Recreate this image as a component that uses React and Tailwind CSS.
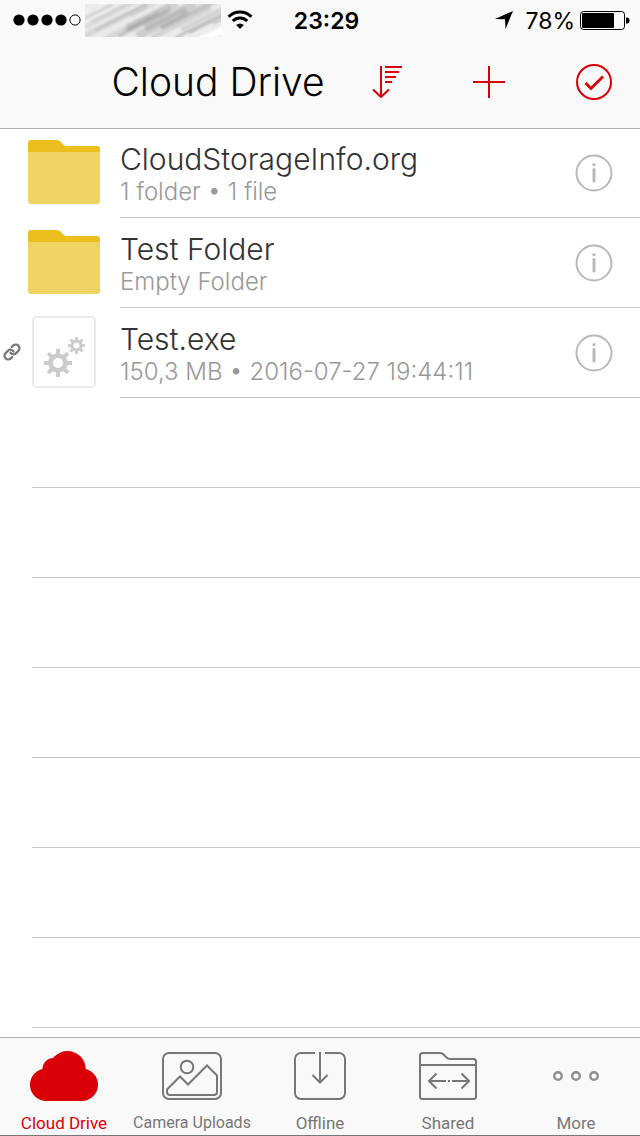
const items = [
  { name: 'CloudStorageInfo.org', detail: '1 folder • 1 file', type: 'folder' },
  { name: 'Test Folder', detail: 'Empty Folder', type: 'folder' },
  { name: 'Test.exe', detail: '150,3 MB • 2016-07-27 19:44:11', type: 'exe', linked: true },
];

const emptyRows = [1, 2, 3, 4, 5, 6, 7];

// x start, y start, length, opacity and width of each pencil stroke
const strokes = [
  [-8, 18, 36, 0.35, 2], [-6, 26, 60, 0.15, 5], [0, 32, 62, 0.2, 6], [10, 26, 60, 0.25, 3],
  [16, 38, 70, 0.2, 7], [34, 32, 50, 0.3, 4], [42, 24, 50, 0.25, 8], [40, 26, 34, 0.3, 3],
  [52, 32, 50, 0.3, 9], [60, 24, 50, 0.3, 7], [66, 34, 60, 0.25, 5], [76, 24, 56, 0.4, 5],
  [90, 34, 54, 0.5, 2], [96, 26, 50, 0.25, 5], [104, 29, 40, 0.4, 2], [128, 20, 20, 0.4, 2],
  [6, 18, 46, 0.2, 3], [46, 12, 30, 0.15, 3], [96, 10, 30, 0.15, 2],
];

const SignalDots = () => (
  <svg viewBox="0 0 68 12" className="w-[68px] h-3" aria-hidden="true">
    {[6, 20, 34, 48].map((x) => (
      <circle key={x} cx={x} cy="6" r="5.6" />
    ))}
    <circle cx="62" cy="6" r="5.1" fill="none" stroke="#000" />
  </svg>
);

const Carrier = () => (
  <svg viewBox="0 0 136 33" className="w-[136px] h-[33px]" aria-hidden="true">
    <defs>
      <filter id="soft" x="-20%" y="-20%" width="140%" height="140%">
        <feGaussianBlur stdDeviation="1" />
      </filter>
    </defs>
    <rect width="136" height="33" fill="#ececec" />
    <g stroke="#888" filter="url(#soft)">
      {strokes.map(([x, y, len, opacity, width]) => (
        <path key={`${x}-${y}`} d={`M${x} ${y}l${len} ${-len / 2}`} strokeOpacity={opacity} strokeWidth={width} />
      ))}
      <path d="M112 38l30-14" stroke="#fff" strokeWidth="7" />
    </g>
  </svg>
);

const WifiIcon = () => (
  <svg viewBox="0 0 26 20" className="w-[26px] h-5" fill="none" stroke="#000" strokeWidth="3" aria-hidden="true">
    <path d="M1.6 6.8a16 16 0 0 1 22.8 0" />
    <path d="M5.8 11a10.2 10.2 0 0 1 14.4 0" />
    <path d="M13 19l-3.8-4a5.4 5.4 0 0 1 7.6 0z" fill="#000" stroke="none" />
  </svg>
);

const LocationIcon = () => (
  <svg viewBox="0 0 18 18" className="w-[18px] h-[18px]" aria-hidden="true">
    <path d="M18 0L10.5 18L10 8.3L0 8z" />
  </svg>
);

const BatteryIcon = () => (
  <svg viewBox="0 0 50 20" className="w-[50px] h-5" aria-hidden="true">
    <rect x="0.5" y="1.5" width="44" height="18" rx="3" fill="none" stroke="#000" />
    <rect x="2" y="3" width="32" height="15" rx="1" />
    <path d="M46 7.5h1a2.5 3 0 0 1 0 6h-1z" />
  </svg>
);

const SortIcon = () => (
  <svg viewBox="0 0 30 32" className="w-[30px] h-8" fill="none" stroke="currentColor" strokeWidth="2" aria-hidden="true">
    <path d="M9 0v31M1 23.5l8 7.5l8-7.5M13 1h17M13 6h14M13 11h11M13 16h7" />
  </svg>
);

const PlusIcon = () => (
  <svg viewBox="0 0 32 32" className="w-8 h-8" stroke="currentColor" strokeWidth="2" aria-hidden="true">
    <path d="M16 0v32M0 16h32" />
  </svg>
);

const SelectIcon = () => (
  <svg viewBox="0 0 36 36" className="w-9 h-9" fill="none" stroke="currentColor" aria-hidden="true">
    <circle cx="18" cy="18" r="17" strokeWidth="2" />
    <path d="M9.5 19l5.500 5.500L27 12.500" strokeWidth="2.8" />
  </svg>
);

const FolderIcon = () => (
  <svg viewBox="0 0 72 64" className="w-[72px] h-16" aria-hidden="true">
    <path d="M0 14V3a3 3 0 0 1 3-3h26q2 0 3.5 1.5l3 3Q37 6 39 6h30a3 3 0 0 1 3 3v5z" fill="#ebbf1e" />
    <path d="M0 12h72v49a3 3 0 0 1-3 3H3a3 3 0 0 1-3-3z" fill="#f0d365" />
  </svg>
);

const Gear = ({ x, y, r, hole, width }) => (
  <g transform={`translate(${x} ${y})`}>
    {[0, 45, 90, 135].map((angle) => (
      <rect key={angle} x={-width / 2} y={-r} width={width} height={r * 2} transform={`rotate(${angle})`} />
    ))}
    <circle r={r * 0.7} />
    <circle r={hole} fill="#fff" />
  </g>
);

const ExeIcon = () => (
  <svg viewBox="0 0 64 72" className="w-16 h-[72px]" fill="#cbcbcb" aria-hidden="true">
    <rect x="1" y="1" width="62" height="70" rx="4" fill="#fff" stroke="#ebebeb" strokeWidth="2" />
    <Gear x={26} y={47} r={14} hole={5} width={4} />
    <Gear x={44.5} y={29.5} r={8.5} hole={3} width={2.8} />
  </svg>
);

const LinkIcon = () => (
  <svg viewBox="0 0 24 24" className="w-[18px] h-[18px]" fill="none" stroke="#777" strokeWidth="3" strokeLinecap="round" aria-label="Shared link">
    <path d="M10 13a5 5 0 0 0 7.54.54l3-3a5 5 0 0 0-7.07-7.07l-1.72 1.71" />
    <path d="M14 11a5 5 0 0 0-7.54-.54l-3 3a5 5 0 0 0 7.07 7.07l1.71-1.71" />
  </svg>
);

const InfoIcon = () => (
  <svg viewBox="0 0 38 38" className="w-[38px] h-[38px]" fill="none" stroke="#b9b9b9" aria-hidden="true">
    <circle cx="19" cy="19" r="17.5" strokeWidth="2" />
    <path d="M19 15.5v11.500" strokeWidth="3" strokeLinecap="round" />
    <circle cx="19" cy="10.7" r="1.6" fill="#b9b9b9" stroke="none" />
  </svg>
);

const CloudIcon = () => (
  <svg viewBox="0 0 68 50" className="w-[68px] h-[50px]" fill="currentColor" aria-hidden="true">
    <circle cx="16.300" cy="33.700" r="16.300" />
    <circle cx="51.700" cy="33.700" r="16.300" />
    <circle cx="23.500" cy="18" r="11" />
    <circle cx="37.500" cy="18.200" r="18.200" />
    <path d="M12.500 18H55.500L52 50H16z" />
  </svg>
);

const CameraIcon = () => (
  <svg viewBox="0 0 60 48" className="w-[60px] h-12" fill="none" stroke="currentColor" strokeWidth="2" aria-hidden="true">
    <rect x="1" y="1" width="58" height="46" rx="6" />
    <circle cx="25" cy="15" r="6.3" />
    <path d="M5 37.5L18 24.5l8 8L45 13.5L55 23.5V40q0 3-3 3H8q-3 0-3-3z" />
  </svg>
);

const OfflineIcon = () => (
  <svg viewBox="0 0 52 48" className="w-[52px] h-12" fill="none" stroke="currentColor" strokeWidth="2" aria-hidden="true">
    <path d="M21 1H7a6 6 0 0 0-6 6v34a6 6 0 0 0 6 6h38a6 6 0 0 0 6-6V7a6 6 0 0 0-6-6H31" />
    <path d="M26 0v30M18.5 23l7.5 7.5l7.5-7.5" />
  </svg>
);

const SharedIcon = () => (
  <svg viewBox="0 0 58 48" className="w-[58px] h-12" fill="none" stroke="currentColor" strokeWidth="2" aria-hidden="true">
    <path d="M1 3.5Q1 1 3.5 1H21q2 0 3.5 1.5l3 3Q29 7 31 7h23.5Q57 7 57 9.5v35q0 2.5-2.5 2.5h-51Q1 47 1 44.5zM1 13h56" />
    <path d="M17.5 21.500l-7.500 7.500l7.500 7.500M10 29h17M29 29h2M33 29h17M42.500 21.500l7.500 7.500l-7.500 7.500" />
  </svg>
);

const MoreIcon = () => (
  <svg viewBox="0 0 46 48" className="w-[46px] h-12" fill="none" stroke="#8e8e8e" strokeWidth="2.4" aria-hidden="true">
    <circle cx="5" cy="24" r="3.8" />
    <circle cx="23" cy="24" r="3.8" />
    <circle cx="41" cy="24" r="3.8" />
  </svg>
);

const tabs = [
  { label: 'Cloud Drive', Icon: CloudIcon, active: true },
  { label: 'Camera Uploads', Icon: CameraIcon },
  { label: 'Offline', Icon: OfflineIcon },
  { label: 'Shared', Icon: SharedIcon },
  { label: 'More', Icon: MoreIcon },
];

const StatusBar = () => (
  <div className="grid grid-cols-[1fr_auto_1fr] items-center h-10 pl-[13px] text-[23px] text-black">
    <div className="flex items-center gap-1">
      <SignalDots />
      <Carrier />
      <span className="pl-0.5">
        <WifiIcon />
      </span>
    </div>
    <span className="pt-0.5 font-semibold">23:29</span>
    <div className="flex items-center justify-end pr-[10px]">
      <LocationIcon />
      <span className="pt-0.5 pl-3 pr-[5px]">78%</span>
      <BatteryIcon />
    </div>
  </div>
);

const Header = () => (
  <header className="relative bg-[#f9f9f9] shadow-[0_1px_0_#b2b2b2]">
    <StatusBar />
    <div className="flex items-center h-[88px] pb-1 pr-7">
      <h1 className="flex-1 pl-16 text-center text-[39px] font-light text-black">Cloud Drive</h1>
      <div className="flex items-center gap-[71px] text-[#d90007]">
        <button aria-label="Sort">
          <SortIcon />
        </button>
        <button aria-label="Add">
          <PlusIcon />
        </button>
        <button aria-label="Select">
          <SelectIcon />
        </button>
      </div>
    </div>
  </header>
);

const ItemRow = ({ item }) => (
  <li className="flex h-[90px]">
    <div className="flex items-center w-[120px] pb-0.5 shrink-0">
      <div className="w-6 pl-[3px]">{item.linked && <LinkIcon />}</div>
      <div className="flex justify-center w-20">
        {item.type === 'folder' ? <FolderIcon /> : <ExeIcon />}
      </div>
    </div>
    <div className="flex flex-1 items-center justify-between min-w-0 pr-[27px] border-b border-[#c8c8c8]">
      <div className="min-w-0 pt-0.5 font-light">
        <p className="truncate text-[30px] leading-9 text-[#333]">{item.name}</p>
        <p className="truncate text-2xl leading-[30px] text-[#999]">{item.detail}</p>
      </div>
      <button aria-label={`Info about ${item.name}`}>
        <InfoIcon />
      </button>
    </div>
  </li>
);

const TabBar = () => (
  <nav className="grid grid-cols-5 h-[99px] bg-[#f9f9f9] border-t border-t-[#b2b2b2] border-b border-b-[#777]">
    {tabs.map(({ label, Icon, active }) => (
      <a
        key={label}
        href="#"
        className={`flex flex-col items-center pt-[13px] font-[Roboto,sans-serif] leading-6 whitespace-nowrap ${
          active ? 'text-[#d90007]' : 'text-[#777]'
        }`}
      >
        <span className="flex items-center h-[50px]">
          <Icon />
        </span>
        {/* Long labels get a smaller size to stay inside the tab */}
        <span className={label.length > 12 ? 'pt-2.5 text-[16px]' : 'pt-2.5 text-[17px]'}>{label}</span>
      </a>
    ))}
  </nav>
);

const App = () => (
  <div className="flex flex-col min-h-screen bg-white font-[Inter,sans-serif]">
    <Header />
    <main className="flex-1">
      <ul>
        {items.map((item) => (
          <ItemRow key={item.name} item={item} />
        ))}
      </ul>
      {/* Blank lines below the last item */}
      {emptyRows.map((row) => (
        <div key={row} className="h-[90px] ml-8 border-b border-[#c8c8c8]" />
      ))}
    </main>
    <TabBar />
  </div>
);

export default App;
